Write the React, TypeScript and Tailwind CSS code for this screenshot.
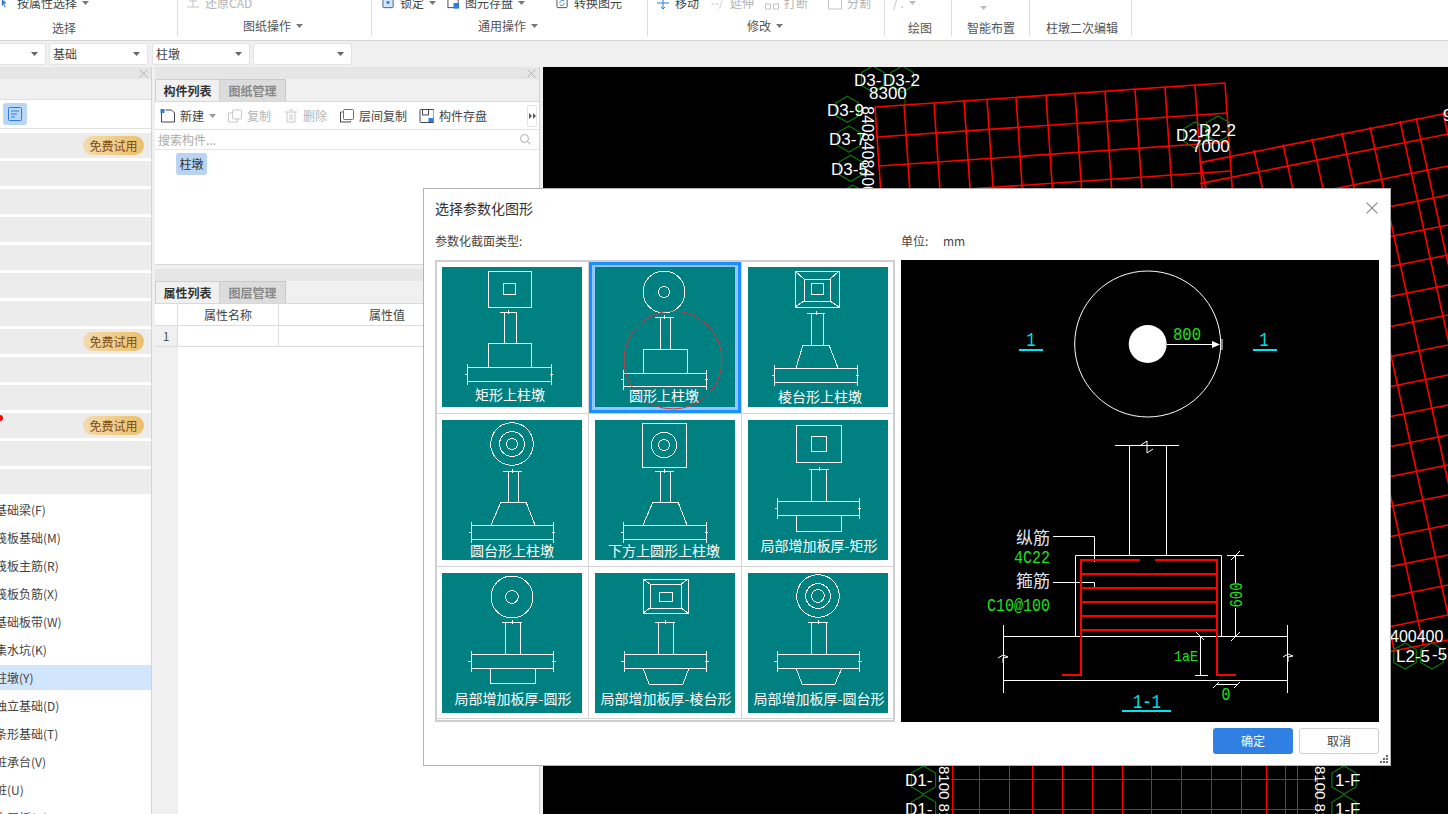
import React from "react";

const Caret = ({ c = "#777" }: { c?: string }) => (
  <svg width="7" height="4" viewBox="0 0 7 4" className="shrink-0"><path d="M0 0h7L3.5 4z" fill={c} /></svg>
);

const CloseX = ({ size = 9, c = "#aaa" }: { size?: number; c?: string }) => (
  <svg width={size} height={size} viewBox="0 0 10 10" className="shrink-0"><path d="M0.5 0.5l9 9M9.5 0.5l-9 9" stroke={c} strokeWidth="1" fill="none" /></svg>
);

const Ic = ({ children, w = 14 }: { children: React.ReactNode; w?: number }) => (
  <svg width={w} height="14" viewBox="0 0 14 14" fill="none" className="shrink-0">{children}</svg>
);

function Tool({ icon, label, gray, caret, cls }: { icon: React.ReactNode; label: string; gray?: boolean; caret?: boolean; cls?: string }) {
  return (
    <div className={`flex items-center gap-[5px] shrink-0 ${cls ?? ""}`}>
      {icon}
      <span className={gray ? "text-[#b4b4b4]" : "text-[#444]"}>{label}</span>
      {caret && <Caret />}
    </div>
  );
}

function Group({ w, pl, children, label, caret, mt, lpl }: { w: string; pl: string; children?: React.ReactNode; label: string; caret?: boolean; mt: string; lpl: string }) {
  return (
    <div className={`${w} h-[36px] shrink-0 border-r border-[#dcdcdc]`}>
      <div className={`flex items-center h-[14px] -mt-[4px] ${pl}`}>{children}</div>
      <div className={`flex items-center gap-[5px] h-[18px] text-[#555] ${mt} ${lpl}`}>
        <span>{label}</span>
        {caret && <Caret />}
      </div>
    </div>
  );
}

function Ribbon() {
  return (
    <div className="flex h-[41px] bg-white border-b border-[#d6d6d6] shrink-0 text-xs leading-[14px]">
      <Group w="w-[178px]" pl="pl-[1px]" label="选择" mt="mt-[9px]" lpl="pl-[52px]">
        <Tool label="按属性选择" caret icon={<Ic w={11}><path d="M1 2l6 5-3 1 2 4-1 1-2-4-2 2z" fill="#2b7de0" /></Ic>} />
      </Group>
      <Group w="w-[194px]" pl="pl-[8px]" label="图纸操作" caret mt="mt-[7px]" lpl="pl-[65px]">
        <Tool label="还原CAD" gray icon={<Ic><path d="M1 11h12M7 1v10M3 5h8" stroke="#c4c4c4" /></Ic>} />
      </Group>
      <Group w="w-[276px]" pl="pl-[10px]" label="通用操作" caret mt="mt-[7px]" lpl="pl-[106px]">
        <Tool label="锁定" caret icon={<Ic w={13}><rect x="1" y="1" width="11" height="11" rx="1" fill="#d6e6fa" stroke="#3a5a86" /><rect x="5" y="5" width="3" height="3" fill="#2b7de0" /></Ic>} />
        <Tool label="图元存盘" caret cls="ml-[11px]" icon={<Ic w={13}><rect x="1" y="1" width="11" height="11" stroke="#445" /><rect x="7" y="7" width="6" height="6" fill="#2b7de0" /></Ic>} />
        <Tool label="转换图元" cls="ml-[31px]" icon={<Ic w={13}><rect x="1" y="1" width="11" height="11" rx="1" stroke="#445" /><path d="M4 7a3 3 0 0 1 5-2M9 7a3 3 0 0 1-5 2" stroke="#2b7de0" /></Ic>} />
      </Group>
      <Group w="w-[237px]" pl="pl-[8px]" label="修改" caret mt="mt-[7px]" lpl="pl-[99px]">
        <Tool label="移动" icon={<Ic><path d="M7 1v12M1 7h12M7 1L5 3M7 1l2 2M7 13l-2-2M7 13l2-2" stroke="#2b7de0" /></Ic>} />
        <Tool label="延伸" gray cls="ml-[11px]" icon={<Ic w={15}><path d="M1 8h8M12 2l-3 11" stroke="#c4c4c4" strokeDasharray="3 1" /></Ic>} />
        <Tool label="打断" gray cls="ml-[10px]" icon={<Ic w={15}><rect x="1" y="8" width="5" height="5" stroke="#c4c4c4" /><rect x="9" y="8" width="5" height="5" stroke="#c4c4c4" /></Ic>} />
        <Tool label="分割" gray cls="ml-[19px]" icon={<Ic w={15}><path d="M1 3h8l5-2v12H1z" stroke="#c4c4c4" /></Ic>} />
      </Group>
      <Group w="w-[67px]" pl="pl-[8px]" label="绘图" mt="mt-[9px]" lpl="pl-[23px]">
        <div className="flex items-center gap-[5px] text-[#bbb]"><span>/ .</span><Caret c="#bbb" /></div>
      </Group>
      <Group w="w-[78px]" pl="pl-[28px]" label="智能布置" mt="mt-[9px]" lpl="pl-[15px]">
        <div className="mt-[10px]"><Caret c="#bbb" /></div>
      </Group>
      <Group w="w-[102px]" pl="pl-[8px]" label="柱墩二次编辑" mt="mt-[9px]" lpl="pl-[16px]" />
    </div>
  );
}

const Select = ({ cls, text }: { cls: string; text?: string }) => (
  <div className={`h-[22px] bg-white border border-[#e2e2e2] rounded-[3px] flex items-center justify-between pl-[3px] pr-[7px] text-xs text-[#444] shrink-0 ${cls}`}>
    <span>{text}</span>
    <Caret c="#666" />
  </div>
);

const listLabels = ["基础梁(F)", "筏板基础(M)", "筏板主筋(R)", "筏板负筋(X)", "基础板带(W)", "集水坑(K)", "柱墩(Y)", "独立基础(D)", "条形基础(T)", "桩承台(V)", "桩(U)", "土层板(N)"];

const Badge = () => (
  <div className="w-[61px] h-[19px] rounded-full bg-gradient-to-r from-[#f3dbae] to-[#ecbf68] text-[#7b4c14] text-xs leading-[19px] text-center">免费试用</div>
);

function LeftPanel() {
  return (
    <div className="w-[152px] shrink-0 bg-white border-r border-[#d4d4d4] flex flex-col overflow-hidden">
      <div className="h-[12px] bg-[#e6e6e6] flex items-center justify-end pr-[3px] shrink-0"><CloseX /></div>
      <div className="h-[21px] bg-[#f0f0f0] border-b border-[#e0e0e0] shrink-0" />
      <div className="h-[29px] border-b border-[#e0e0e0] flex items-center pl-[3px] shrink-0">
        <div className="w-[24px] h-[22px] rounded-[3px] bg-[#b9d7f5] flex items-center justify-center">
          <svg width="14" height="14" viewBox="0 0 14 14" fill="none"><rect x="0.5" y="0.5" width="13" height="13" rx="1" stroke="#2b7de0" /><path d="M3 4h8M3 7h6M3 10h4" stroke="#2b7de0" /></svg>
        </div>
      </div>
      <div className="flex flex-col gap-[3px] pt-[4px]">
        {Array.from({ length: 13 }).map((_, i) => (
          <div key={i} className="relative h-[25px] bg-[#ececec] flex items-center justify-end pr-[7px] shrink-0">
            {(i === 0 || i === 7 || i === 10) && <Badge />}
            {i === 10 && <div className="absolute -left-[3px] top-[2px] w-[6px] h-[6px] rounded-full bg-[#ff0000]" />}
          </div>
        ))}
        {listLabels.map((t, i) => (
          <div key={t} className={`h-[25px] flex items-center shrink-0 text-xs text-[#444] whitespace-nowrap ${i === 6 ? "bg-[#d1e5fc]" : ""}`}>
            <span className="-ml-[5px]">{t}</span>
          </div>
        ))}
      </div>
    </div>
  );
}

const Tabs = ({ a, b }: { a: string; b: string }) => (
  <div className="h-[23px] bg-[#f0f0f0] border-b border-[#d8d8d8] flex shrink-0 text-xs font-bold">
    <div className="w-[65px] border-x border-t border-[#d0d0d0] flex items-center justify-center text-[#333]">{a}</div>
    <div className="w-[66px] border-r border-t border-[#c8c8c8] bg-[#dcdcdc] flex items-center justify-center text-[#888]">{b}</div>
  </div>
);

const BarBtn = ({ icon, label, gray, cls }: { icon: React.ReactNode; label: string; gray?: boolean; cls?: string }) => (
  <div className={`flex items-center gap-[5px] shrink-0 ${cls ?? ""}`}>
    {icon}
    <span className={gray ? "text-[#b4b4b4]" : "text-[#444]"}>{label}</span>
  </div>
);

function MiddlePanel() {
  return (
    <div className="w-[385px] shrink-0 flex flex-col overflow-hidden border-r border-[#d4d4d4]">
      <div className="h-[12px] bg-[#e6e6e6] flex items-center justify-end pr-[3px] shrink-0"><CloseX /></div>
      <Tabs a="构件列表" b="图纸管理" />
      <div className="h-[28px] bg-white border-b border-[#e0e0e0] flex items-center pl-[5px] text-xs shrink-0 relative">
        <BarBtn label="新建" icon={<Ic w={15}><path d="M1 3v10h13V4l-3-3H5" stroke="#445" /><rect x="0" y="0" width="4" height="4" fill="#2b7de0" /></Ic>} />
        <div className="ml-[5px]"><Caret c="#999" /></div>
        <BarBtn label="复制" gray cls="ml-[11px]" icon={<Ic w={15}><rect x="5" y="1" width="9" height="9" rx="1" stroke="#c8c8c8" /><path d="M5 4H1v9h9v-3" stroke="#c8c8c8" /></Ic>} />
        <BarBtn label="删除" gray cls="ml-[13px]" icon={<Ic w={14}><path d="M1 3h12M3 3v10h8V3M5 1h4M6 5v6M8 5v6" stroke="#c8c8c8" /></Ic>} />
        <BarBtn label="层间复制" cls="ml-[12px]" icon={<Ic w={15}><rect x="4" y="0.5" width="10" height="10" rx="1" stroke="#2b7de0" /><path d="M3 3H1v10h10v-1" stroke="#445" /></Ic>} />
        <BarBtn label="构件存盘" cls="ml-[12px]" icon={<Ic w={15}><rect x="0.5" y="0.5" width="14" height="13" rx="1" stroke="#445" /><path d="M3 1v5h6V1" stroke="#445" /><rect x="9" y="9" width="5" height="4" fill="#2b7de0" /></Ic>} />
        <div className="absolute right-[2px] top-[3px] w-[10px] h-[22px] bg-white border border-[#e4e4e4] rounded-[2px] flex items-center justify-center">
          <svg width="7" height="6" viewBox="0 0 7 6"><path d="M0 0l3 3-3 3zM4 0l3 3-3 3z" fill="#555" /></svg>
        </div>
      </div>
      <div className="h-[20px] bg-white border-b border-[#e6e6e6] flex items-center justify-between pl-[3px] pr-[8px] text-xs text-[#aaa] shrink-0">
        <span>搜索构件...</span>
        <svg width="11" height="11" viewBox="0 0 11 11" fill="none"><circle cx="4.5" cy="4.5" r="4" stroke="#aaa" /><path d="M7.5 7.5l3 3" stroke="#aaa" /></svg>
      </div>
      <div className="h-[115px] bg-white border-b border-[#d8d8d8] pl-[21px] pt-[3px] shrink-0">
        <div className="w-[31px] h-[22px] rounded-[3px] bg-[#b9d3f0] text-xs text-[#333] flex items-center justify-center">柱墩</div>
      </div>
      <div className="h-[4px] bg-[#f0f0f0] shrink-0" />
      <div className="h-[12px] bg-[#e6e6e6] shrink-0" />
      <Tabs a="属性列表" b="图层管理" />
      <div className="h-[22px] bg-white border-b border-[#dcdcdc] flex text-xs text-[#444] shrink-0">
        <div className="w-[23px] border-r border-[#dcdcdc]" />
        <div className="w-[101px] border-r border-[#dcdcdc] flex items-center justify-center">属性名称</div>
        <div className="flex-1 flex items-center justify-center pr-[44px]">属性值</div>
      </div>
      <div className="h-[21px] bg-white border-b border-[#dcdcdc] flex text-xs text-[#555] shrink-0">
        <div className="w-[23px] bg-[#f0f0f0] border-r border-[#dcdcdc] flex items-center justify-center">1</div>
        <div className="w-[101px] border-r border-[#dcdcdc]" />
      </div>
      <div className="flex-1 bg-white flex">
        <div className="w-[23px] bg-[#f0f0f0]" />
      </div>
    </div>
  );
}

const hexPts = (cx: number, cy: number, r: number) =>
  [0, 1, 2, 3, 4, 5].map((i) => {
    const a = (Math.PI / 3) * i - Math.PI / 2;
    return `${cx + r * Math.cos(a)},${cy + r * Math.sin(a)}`;
  }).join(" ");

const Hex = ({ x, y, r = 13 }: { x: number; y: number; r?: number }) => <polygon points={hexPts(x, y, r)} fill="none" stroke="#0a7a0a" strokeWidth="1.2" />;

const L = ({ t, x, y, s = 17, rot }: { t: string; x: number; y: number; s?: number; rot?: number }) => (
  <text x={x} y={y} fontSize={s} fill="#fff" transform={rot !== undefined ? `rotate(${rot} ${x} ${y})` : undefined}>{t}</text>
);

function CadCanvas() {
  const g1x = [875, 904, 934, 964, 987, 1016, 1046, 1075, 1105, 1135, 1165, 1195, 1225];
  const g1y = [107, 137, 166, 195, 225];
  const g2x = [1200, 1254, 1283, 1312, 1342, 1370, 1400, 1416, 1443];
  const g2y = [113, 134, 166, 195, 225, 255, 285, 315, 345, 375, 405, 435, 465, 495, 525, 555, 585, 615, 640];
  const g3x = [952, 979, 1009, 1032, 1062, 1092, 1122, 1151, 1181, 1211, 1241, 1266, 1285, 1297, 1317];
  return (
    <div className="flex-1 bg-black overflow-hidden">
      <svg width="905" height="747" viewBox="543 67 905 747" className="block font-['Liberation_Sans',sans-serif]">
        <g stroke="#f00" strokeWidth="1.6" fill="none">
          {g1x.map((x) => {
            const y = 107 - ((x - 875) * 24) / 350;
            return <line key={x} x1={x} y1={y} x2={x + 0.0686 * 200} y2={y + 200} />;
          })}
          {g1y.map((y) => {
            const x = 875 + 0.0686 * (y - 107);
            return <line key={y} x1={x} y1={y} x2={x + 350} y2={y - 24} />;
          })}
          {g2x.map((x) => {
            const y = 401 - 0.2 * x;
            return <line key={x} x1={x} y1={y} x2={x + 111.5} y2={y + 507} />;
          })}
          {g2y.map((y) => <line key={y} x1={1448} y1={y} x2={1200} y2={y + 49.6} />)}
        </g>
        <g stroke="#f00" strokeWidth="1" fill="none">
          {g3x.map((x) => <line key={x} x1={x + 0.5} y1={760} x2={x + 0.5} y2={814} />)}
          <line x1={951} y1={779.5} x2={1318} y2={779.5} />
          <line x1={951} y1={809.5} x2={1318} y2={809.5} />
        </g>
        <Hex x={872.7} y={79} /><Hex x={902.3} y={79} /><Hex x={847.3} y={109.3} /><Hex x={849} y={139} /><Hex x={850.7} y={168.3} /><Hex x={852.7} y={198} />
        <line x1="905" y1="92" x2="905" y2="108" stroke="#0a7a0a" />
        <Hex x={1195} y={135} /><Hex x={1218} y={129} />
        <Hex x={923.5} y={780} r={14} /><Hex x={923.5} y={809} r={14} /><Hex x={1344} y={780} r={14} /><Hex x={1344} y={809} r={14} />
        <Hex x={1405} y={656} /><Hex x={1432} y={656} />
        <L t="D3-" x={854} y={86} /><L t="D3-2" x={883} y={86} /><L t="8300" x={869} y={99} />
        <L t="D3-9" x={827} y={116} /><L t="D3-7" x={829} y={145} /><L t="D3-5" x={831} y={175} />
        <L t="8408408400" x={862} y={106} rot={90} s={16} />
        <L t="D2-1" x={1176} y={141} /><L t="D2-2" x={1199} y={136} /><L t="7000" x={1192} y={152} />
        <L t="9" x={1443} y={121} />
        <L t="D1-" x={905} y={786} /><L t="D1-" x={905} y={815} /><L t="1-F" x={1335} y={786} /><L t="1-F" x={1335} y={815} />
        <L t="8100 8100" x={939} y={766} rot={90} s={15} /><L t="8100 8100" x={1315} y={766} rot={90} s={15} />
        <L t="400400" x={1390} y={642} s={16} /><L t="L2-5" x={1396} y={662} s={17} /><L t="-5" x={1432} y={660} s={17} />
      </svg>
    </div>
  );
}

/* ---------- thumbnails ---------- */

const Dim = ({ x1, x2, y }: { x1: number; x2: number; y: number }) => (
  <g><line x1={x1} x2={x2} y1={y} y2={y} /><line x1={(x1 + x2) / 2} x2={(x1 + x2) / 2} y1={y - 2} y2={y + 2} /></g>
);
const Col = ({ x1, x2, y1, y2 }: { x1: number; x2: number; y1: number; y2: number }) => (
  <g><line x1={x1} x2={x1} y1={y1} y2={y2} /><line x1={x2} x2={x2} y1={y1} y2={y2} /></g>
);
const Slab = ({ x1, x2, y1, y2, t = 2 }: { x1: number; x2: number; y1: number; y2: number; t?: number }) => (
  <g>
    <line x1={x1} x2={x2} y1={y1} y2={y1} />
    <line x1={x1} x2={x2} y1={y2} y2={y2} />
    <line x1={x1} x2={x1} y1={y1 - 3} y2={y2 + 4} />
    <line x1={x2} x2={x2} y1={y1 - 3} y2={y2 + 4} />
    <line x1={x1 - t} x2={x1 + 1} y1={(y1 + y2) / 2} y2={(y1 + y2) / 2} />
    <line x1={x2 - 1} x2={x2 + t} y1={(y1 + y2) / 2} y2={(y1 + y2) / 2} />
  </g>
);
const R = ({ x1, y1, x2, y2 }: { x1: number; y1: number; x2: number; y2: number }) => (
  <rect x={x1} y={y1} width={x2 - x1} height={y2 - y1} />
);
const Pyr = ({ a, b, c }: { a: number[]; b: number[]; c: number[] }) => (
  <g>
    <R x1={a[0]} y1={a[1]} x2={a[2]} y2={a[3]} />
    <R x1={b[0]} y1={b[1]} x2={b[2]} y2={b[3]} />
    <R x1={c[0]} y1={c[1]} x2={c[2]} y2={c[3]} />
    <path d={`M${a[0]} ${a[1]}L${b[0]} ${b[1]}M${a[2]} ${a[1]}L${b[2]} ${b[1]}M${a[0]} ${a[3]}L${b[0]} ${b[3]}M${a[2]} ${a[3]}L${b[2]} ${b[3]}`} />
  </g>
);
const Cs = ({ x, y, rs }: { x: number; y: number; rs: number[] }) => (
  <g>{rs.map((r) => <circle key={r} cx={x} cy={y} r={r} />)}</g>
);
const Trap = ({ x1, x2, x3, x4, y1, y2 }: { x1: number; x2: number; x3: number; x4: number; y1: number; y2: number }) => (
  <path d={`M${x1} ${y1}H${x2}L${x4} ${y2}M${x1} ${y1}L${x3} ${y2}`} />
);
const TrapDown = ({ x1, x2, x3, x4, y1, y2 }: { x1: number; x2: number; x3: number; x4: number; y1: number; y2: number }) => (
  <path d={`M${x1} ${y1}L${x3} ${y2}H${x4}L${x2} ${y1}`} />
);

function Thumb({ label, lx, ly, children }: { label: string; lx: number; ly: number; children: React.ReactNode }) {
  return (
    <svg width="140" height="140" viewBox="0 0 140 140" className="block bg-[#008080] overflow-visible">
      <g stroke="#fff" strokeWidth="1" fill="none" shapeRendering="crispEdges">{children}</g>
      <text x={lx} y={ly + 5} fontSize="14" fill="#fff" textAnchor="middle">{label}</text>
    </svg>
  );
}

const thumbs: { label: string; lx: number; ly: number; body: React.ReactNode }[] = [
  {
    label: "矩形上柱墩", lx: 68, ly: 128,
    body: (<>
      <R x1={46} y1={4} x2={89} y2={40} /><R x1={61} y1={16} x2={73} y2={27} />
      <Dim x1={58} x2={75} y={45} /><Col x1={62} x2={74} y1={45} y2={76} />
      <R x1={46} y1={76} x2={89} y2={100} /><Slab x1={25} x2={109} y1={100} y2={114} />
    </>),
  },
  {
    label: "圆形上柱墩", lx: 69, ly: 129,
    body: (<>
      <Cs x={69} y={25} rs={[21, 5.5]} />
      <Dim x1={60} x2={79} y={50} /><Col x1={65} x2={75} y1={50} y2={82} />
      <R x1={48} y1={82} x2={92} y2={106} /><Slab x1={28} x2={111} y1={106} y2={119} />
    </>),
  },
  {
    label: "棱台形上柱墩", lx: 72, ly: 130,
    body: (<>
      <Pyr a={[47, 4, 91, 40]} b={[56, 12, 82, 34]} c={[63, 16, 75, 27]} />
      <Dim x1={59} x2={77} y={46} /><Col x1={63} x2={75} y1={46} y2={78} />
      <Trap x1={55} x2={81} x3={48} x4={90} y1={78} y2={101} /><Slab x1={26} x2={109} y1={101} y2={115} />
    </>),
  },
  {
    label: "圆台形上柱墩", lx: 70, ly: 131,
    body: (<>
      <Cs x={70} y={24} rs={[21.3, 12.5, 5.5]} />
      <Dim x1={61} x2={80} y={51} /><Col x1={66} x2={76} y1={51} y2={82} />
      <Trap x1={59} x2={84} x3={49} x4={93} y1={82} y2={105} /><Slab x1={29} x2={111} y1={105} y2={119} />
    </>),
  },
  {
    label: "下方上圆形上柱墩", lx: 69, ly: 131,
    body: (<>
      <R x1={47} y1={3} x2={91} y2={47} /><Cs x={69} y={25} rs={[12.7, 5.5]} />
      <Dim x1={60} x2={79} y={51} /><Col x1={65} x2={75} y1={51} y2={82} />
      <Trap x1={58} x2={83} x3={48} x4={92} y1={82} y2={105} /><Slab x1={28} x2={111} y1={105} y2={119} />
    </>),
  },
  {
    label: "局部增加板厚-矩形", lx: 71, ly: 126,
    body: (<>
      <R x1={48} y1={5} x2={93} y2={42} /><R x1={63} y1={16} x2={78} y2={31} />
      <Dim x1={61} x2={81} y={49} /><Col x1={63} x2={78} y1={49} y2={81} />
      <Slab x1={29} x2={111} y1={81} y2={95} /><R x1={48} y1={95} x2={93} y2={111} />
    </>),
  },
  {
    label: "局部增加板厚-圆形", lx: 71, ly: 126,
    body: (<>
      <Cs x={70} y={24} rs={[21, 6.3]} />
      <Dim x1={60} x2={80} y={49} /><Col x1={63} x2={78} y1={49} y2={81} />
      <Slab x1={29} x2={111} y1={81} y2={95} t={3} /><R x1={48} y1={95} x2={93} y2={110} />
    </>),
  },
  {
    label: "局部增加板厚-棱台形", lx: 71, ly: 126,
    body: (<>
      <Pyr a={[48, 6, 93, 40]} b={[55, 11, 86, 35]} c={[64, 19, 77, 28]} />
      <Dim x1={60} x2={80} y={49} /><Col x1={63} x2={78} y1={49} y2={81} />
      <Slab x1={29} x2={111} y1={81} y2={95} t={3} /><TrapDown x1={48} x2={94} x3={54} x4={88} y1={95} y2={111} />
    </>),
  },
  {
    label: "局部增加板厚-圆台形", lx: 71, ly: 126,
    body: (<>
      <Cs x={70} y={23} rs={[21.3, 12.3, 6.3]} />
      <Dim x1={60} x2={80} y={49} /><Col x1={63} x2={78} y1={49} y2={81} />
      <Slab x1={29} x2={111} y1={81} y2={95} t={3} /><TrapDown x1={48} x2={94} x3={54} x4={87} y1={95} y2={111} />
    </>),
  },
];

const cellCls = [
  "pl-[5px] pt-[5px] border-r border-b",
  "pl-[6px] pt-[5px] border-r border-b relative z-10 shadow-[inset_0_0_0_3px_#1a8fff,inset_0_0_0_6px_#93c5fd]",
  "pl-[6px] pt-[5px] border-b",
  "pl-[5px] pt-[6px] border-r border-b",
  "pl-[6px] pt-[6px] border-r border-b",
  "pl-[6px] pt-[6px] border-b",
  "pl-[5px] pt-[6px] border-r border-b",
  "pl-[6px] pt-[6px] border-r border-b",
  "pl-[6px] pt-[6px] border-b",
];

function ThumbGrid() {
  return (
    <div className="w-[460px] h-[462px] border-2 border-[#cfcfcf] bg-white grid grid-cols-[152px_153px_151px] grid-rows-[152px_153px_152px] shrink-0">
      {thumbs.map((t, i) => (
        <div key={t.label} className={`border-[#d4d4d4] ${cellCls[i]}`}>
          <Thumb label={t.label} lx={t.lx} ly={t.ly}>
            {t.body}
            {i === 1 && <circle cx={78} cy={93} r={49} stroke="#d8323c" shapeRendering="auto" />}
          </Thumb>
        </div>
      ))}
    </div>
  );
}

const Num = ({ t, x, y, w, s = 18, anchor = "start" }: { t: string; x: number; y: number; w: number; s?: number; anchor?: "start" | "middle" | "end" }) => (
  <text x={x} y={y} fontSize={s} textAnchor={anchor} textLength={w} lengthAdjust="spacingAndGlyphs">{t}</text>
);

function Preview() {
  const red = [574, 588, 602, 616, 630];
  const G = "#1fe01f";
  const C = "#00e5f0";
  return (
    <svg width="478" height="462" viewBox="901 260 478 462" className="block bg-black shrink-0 font-['Liberation_Mono',monospace]">
      <g stroke="#fff" fill="none" strokeWidth="1">
        <circle cx="1147.7" cy="344" r="73" />
        <line x1="1167" y1="344.5" x2="1213" y2="344.5" />
        <line x1="1222" y1="339" x2="1222" y2="350" />
        <line x1="1115" x2="1179" y1="445.5" y2="445.5" />
        <path d="M1141 445l6-4v12l6-4" />
        <line x1="1129.5" x2="1129.5" y1="445" y2="556" />
        <line x1="1166.5" x2="1166.5" y1="445" y2="556" />
        <path d="M1075.5 636V555.5H1221.5V636" />
        <line x1="1003" x2="1288" y1="636.5" y2="636.5" />
        <line x1="1003" x2="1288" y1="680.5" y2="680.5" />
        <line x1="1003.5" x2="1003.5" y1="625" y2="693" />
        <line x1="1287.5" x2="1287.5" y1="625" y2="693" />
        <path d="M998 658l5-3 5 2-5 1v5M1283 657l5-3 5 2-5 1v5" />
        <path d="M1053 536.5H1094.5V562M1053 582.5H1094.5V588" />
        <path d="M1235.5 555.5V583M1235.5 608V636" />
        <path d="M1227 555.5h17M1231 560l9-9M1231 641l9-9" />
        <path d="M1200.5 636v39M1195 675.5h13M1196 632l8 8" />
        <path d="M1216 684.5h21M1213 688l6-6M1234 688l6-6" />
      </g>
      <circle cx="1147.7" cy="344" r="19" fill="#fff" />
      <path d="M1212 341l8 3.5-8 3.5z" fill="#fff" />
      <g stroke="#f00" strokeWidth="2" fill="none">
        <path d="M1062 675H1081V560H1140M1155 560H1217V675H1236" />
        {red.map((y) => <line key={y} x1="1081" x2="1217" y1={y} y2={y} />)}
      </g>
      <g fill={C} stroke="none">
        <rect x="1019" y="349" width="24" height="2" /><rect x="1253" y="349" width="24" height="2" /><rect x="1122" y="710" width="49" height="2" />
        <Num t="1" x={1031} y={346} w={9} s={20} anchor="middle" />
        <Num t="1" x={1264} y={346} w={9} s={20} anchor="middle" />
        <Num t="1-1" x={1147} y={708} w={28} s={21} anchor="middle" />
      </g>
      <g fill={G}>
        <Num t="800" x={1187} y={340} w={28} anchor="middle" />
        <Num t="4C22" x={1050} y={563} w={36} anchor="end" />
        <Num t="C10@100" x={1050} y={611} w={63} anchor="end" />
        <Num t="1aE" x={1186} y={661} w={24} s={15} anchor="middle" />
        <Num t="0" x={1226} y={700} w={9} s={18} anchor="middle" />
        <g transform="rotate(-90 1236 595)"><Num t="600" x={1236} y={601} w={25} anchor="middle" /></g>
      </g>
      <g fill="#dfe7f5" className="font-['Noto_Sans_CJK_SC',sans-serif]">
        <text x="1050" y="544" fontSize="17" textAnchor="end">纵筋</text>
        <text x="1050" y="587" fontSize="17" textAnchor="end">箍筋</text>
      </g>
    </svg>
  );
}

function Dialog() {
  return (
    <div className="absolute left-[423px] top-[188px] w-[968px] h-[578px] bg-white border border-[#b4b4b4] text-[#444]">
      <div className="h-[38px] pl-[11px] pr-[12px] flex items-center justify-between text-sm text-[#333]">
        <span>选择参数化图形</span>
        <CloseX size={12} c="#8a8a8a" />
      </div>
      <div className="h-[33px] pb-[5px] pl-[11px] flex items-center text-xs">
        <span className="w-[466px]">参数化截面类型:</span>
        <span className="w-[42px]">单位:</span>
        <span>mm</span>
      </div>
      <div className="flex gap-[6px] pl-[11px]">
        <ThumbGrid />
        <Preview />
      </div>
      <div className="flex justify-end gap-[6px] pr-[11px] mt-[6px]">
        <div className="w-[80px] h-[26px] rounded-[3px] bg-[#2f80e2] text-white text-xs flex items-center justify-center">确定</div>
        <div className="w-[80px] h-[26px] rounded-[3px] bg-white border border-[#cfcfcf] text-[#444] text-xs flex items-center justify-center">取消</div>
      </div>
      <svg width="9" height="9" viewBox="0 0 9 9" className="absolute right-[1px] bottom-[1px]">
        <path d="M6 0h2v2H6zM3 3h2v2H3zM6 3h2v2H6zM0 6h2v2H0zM3 6h2v2H3zM6 6h2v2H6z" fill="#666" />
      </svg>
    </div>
  );
}

export default function App() {
  return (
    <div className="relative w-[1448px] h-[814px] overflow-hidden flex flex-col bg-[#f0f0f0] font-['Noto_Sans_CJK_SC','Liberation_Sans',sans-serif]">
      <Ribbon />
      <div className="h-[26px] flex items-start pt-[2px] gap-[3px] shrink-0 bg-[#f0f0f0]">
        <Select cls="w-[96px] -ml-[50px]" />
        <Select cls="w-[99px]" text="基础" />
        <Select cls="w-[98px] ml-[1px]" text="柱墩" />
        <Select cls="w-[99px]" />
      </div>
      <div className="flex-1 flex min-h-0">
        <LeftPanel />
        <div className="w-[3px] shrink-0" />
        <MiddlePanel />
        <div className="w-[3px] shrink-0" />
        <CadCanvas />
      </div>
      <Dialog />
    </div>
  );
}
